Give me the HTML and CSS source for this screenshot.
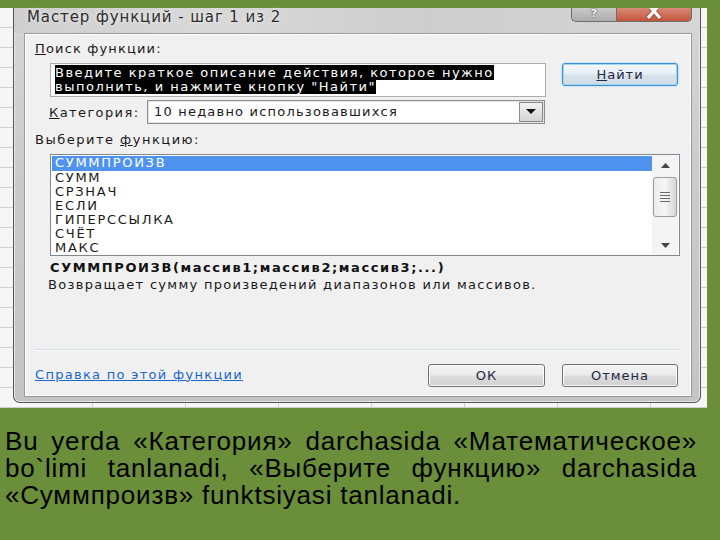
FILE: index.html
```html
<!DOCTYPE html>
<html lang="ru">
<head>
<meta charset="utf-8">
<title>Мастер функций</title>
<link rel="stylesheet" href="styles.css">
</head>
<body>
<div class="shot">
  <div class="window">
    <div class="titlebar">
      <span class="title">Мастер функций - шаг 1 из 2</span>
      <div class="tb-buttons">
        <div class="tb-btn tb-help"><span class="tb-glyph">?</span></div>
        <div class="tb-btn tb-close">
          <svg class="tb-x" width="20" height="16" viewBox="0 0 20 16"><path d="M4 -4 L16 10 M16 -4 L4 10" stroke="#fff" stroke-width="3.2" fill="none"/></svg>
        </div>
      </div>
    </div>
    <div class="client">
      <div class="lbl lbl-top"><u>П</u>оиск функции:</div>
      <div class="row search-row">
        <div class="textbox"><span class="sel">Введите краткое описание действия, которое нужно <br>выполнить, и нажмите кнопку "Найти"</span></div>
        <button class="btn btn-find"><u>Н</u>айти</button>
      </div>
      <div class="row cat-row">
        <span class="cat-label"><u>К</u>атегория:</span>
        <div class="combo">
          <span class="combo-text">10 недавно использовавшихся</span>
          <span class="combo-btn"><svg width="10" height="6" viewBox="0 0 10 6"><path d="M0 0 H10 L5 5 Z" fill="#111"/></svg></span>
        </div>
      </div>
      <div class="lbl lbl-choose">Выберите <u>ф</u>ункцию:</div>
      <div class="listbox">
        <ul class="items">
          <li class="selected">СУММПРОИЗВ</li>
          <li>СУММ</li>
          <li>СРЗНАЧ</li>
          <li>ЕСЛИ</li>
          <li>ГИПЕРССЫЛКА</li>
          <li>СЧЁТ</li>
          <li>МАКС</li>
        </ul>
        <div class="scrollbar">
          <div class="sb-arrow"><svg width="9" height="5" viewBox="0 0 9 5"><path d="M0 5 L4.5 0 L9 5 Z" fill="#444"/></svg></div>
          <div class="sb-track">
            <div class="sb-thumb">
              <span class="grip"></span><span class="grip"></span><span class="grip"></span><span class="grip"></span>
            </div>
          </div>
          <div class="sb-arrow sb-down"><svg width="9" height="5" viewBox="0 0 9 5"><path d="M0 0 L9 0 L4.5 5 Z" fill="#444"/></svg></div>
        </div>
      </div>
      <div class="syntax">СУММПРОИЗВ(массив1;массив2;массив3;...)</div>
      <div class="desc">Возвращает сумму произведений диапазонов или массивов.</div>
      <div class="footer">
        <div class="sep"></div>
        <div class="row btn-row">
          <a class="help-link" href="#">Справка по этой функции</a>
          <button class="btn btn-ok">ОК</button>
          <button class="btn btn-cancel">Отмена</button>
        </div>
      </div>
    </div>
  </div>
</div>
<p class="caption">Bu yerda «Категория» darchasida «Математическое» bo`limi tanlanadi, «Выберите функцию» darchasida «Суммпроизв» funktsiyasi tanlanadi.</p>
</body>
</html>
```
FILE: styles.css
```css
html, body {
  margin: 0;
  padding: 0;
}
body {
  background: #6a8e39;
  width: 720px;
  height: 540px;
  overflow: hidden;
}
.shot {
  margin-top: 8px;
  width: 707px;
  height: 400px;
  box-sizing: border-box;
  padding-left: 13px;
  background-color: #f6f6f6;
  background-image:
    repeating-linear-gradient(to bottom, transparent 0 19px, #cfcfcf 19px 20px),
    repeating-linear-gradient(to right, transparent 0 92px, #cfcfcf 92px 93px);
}
.window {
  width: 688px;
  height: 395px;
  box-sizing: border-box;
  border: 1px solid #555;
  border-top: none;
  border-radius: 0 0 7px 7px;
  background: linear-gradient(to bottom, #d6d6d6 0%, #cbcbcb 40%, #c4c4c4 100%);
  box-shadow: inset 1px 0 0 #e8e8e8, inset -1px 0 0 #e8e8e8, inset 0 -1px 0 #e8e8e8;
  display: flex;
  flex-direction: column;
}
.titlebar {
  height: 25px;
  display: flex;
  justify-content: space-between;
  align-items: flex-start;
  background: linear-gradient(to right, #cfcfcf 0%, #d9d9d9 30%, #cdcdcd 60%, #d6d6d6 100%);
}
.title {
  font-family: "DejaVu Sans", sans-serif;
  font-size: 15px;
  letter-spacing: 0.9px;
  line-height: 18px;
  color: #2e2e2e;
  padding-left: 13px;
  text-shadow: 0 0 4px rgba(255,255,255,0.8);
}
.tb-buttons {
  display: flex;
  margin-right: 8px;
}
.tb-btn {
  height: 14px;
  box-sizing: border-box;
  border: 1px solid #6e6e6e;
  border-top: none;
  overflow: hidden;
  display: flex;
  justify-content: center;
  align-items: flex-start;
}
.tb-help {
  width: 45px;
  border-radius: 0 0 0 5px;
  background: linear-gradient(to bottom, #c9c9c9, #adadad);
  border-right: none;
}
.tb-glyph {
  font-family: "DejaVu Sans", sans-serif;
  font-weight: bold;
  font-size: 11px;
  line-height: 12px;
  margin-top: 0;
  color: #f2f2f2;
  text-shadow: 0 0 1px #555, 0 0 2px #555;
}
.tb-close {
  width: 76px;
  border-radius: 0 0 5px 0;
  background: linear-gradient(to bottom, #d88b78, #c4553d);
}
.tb-x {
  margin-top: 0;
  filter: drop-shadow(0 0 1px #7a2a1a);
}
.client {
  flex: 1;
  margin: 0 8px 5px 10px;
  border: 1px solid #9a9a9a;
  box-shadow: inset 0 0 0 1px #ffffff;
  background: #f0f0f0;
  padding: 0 11px 9px 10px;
  display: flex;
  flex-direction: column;
  font-family: "DejaVu Sans", sans-serif;
  font-size: 13px;
  letter-spacing: 1.4px;
  color: #1a1a1a;
}
.lbl {
  line-height: 16px;
}
.lbl-top {
  margin-top: 7px;
  letter-spacing: 1.15px;
}
.lbl-choose {
  margin-top: 8px;
  letter-spacing: 1.5px;
}
.row {
  display: flex;
  align-items: flex-start;
}
.search-row {
  margin-top: 6px;
  margin-left: 15px;
}
.textbox {
  width: 496px;
  height: 34px;
  box-sizing: border-box;
  background: #fff;
  border: 1px solid #abadb3;
  padding: 2px 4px 0;
  line-height: 14px;
  letter-spacing: 1.5px;
}
.sel {
  background: #000;
  color: #fff;
}
.btn {
  font-family: "DejaVu Sans", sans-serif;
  font-size: 13px;
  letter-spacing: 1px;
  color: #1d2844;
  height: 23px;
  box-sizing: border-box;
  border: 1px solid #707070;
  border-radius: 3px;
  background: linear-gradient(to bottom, #f3f3f3 0%, #ebebeb 48%, #dddddd 52%, #d0d0d0 100%);
  box-shadow: inset 0 0 0 1px #fbfbfb;
  padding: 0;
  line-height: 20px;
}
.btn-find {
  width: 116px;
  margin-left: 16px;
  border-color: #3d8fd0;
  box-shadow: inset 0 0 0 1px #9fd8f7, 0 0 2px #7fc4ee;
  background: linear-gradient(to bottom, #f4f8fb 0%, #e6eef4 48%, #d8e2ea 52%, #cfdbe4 100%);
}
.cat-row {
  margin-top: 3px;
  align-items: center;
  height: 24px;
}
.cat-label {
  width: 98px;
  margin-left: 14px;
}
.combo {
  width: 398px;
  height: 24px;
  box-sizing: border-box;
  border: 1px solid #8f8f8f;
  box-shadow: inset 0 0 0 1px #e2e2e2;
  background: #fff;
  display: flex;
  align-items: center;
  justify-content: space-between;
  padding: 1px;
}
.combo-text {
  padding-left: 5px;
  line-height: 16px;
  letter-spacing: 1.2px;
}
.combo-btn {
  width: 24px;
  height: 20px;
  box-sizing: border-box;
  border: 1px solid #8a8a8a;
  background: linear-gradient(to bottom, #f2f2f2, #d4d4d4);
  display: flex;
  align-items: center;
  justify-content: center;
}
.listbox {
  margin-top: 6px;
  margin-left: 15px;
  height: 102px;
  box-sizing: border-box;
  border: 1px solid #828790;
  background: #fff;
  display: flex;
  padding: 1px 1px 1px 1px;
}
.items {
  list-style: none;
  margin: 0;
  padding: 0;
  flex: 1;
}
.items li {
  line-height: 14px;
  height: 14px;
  padding-left: 3px;
  color: #1a1a1a;
  letter-spacing: 1.7px;
}
.items li.selected {
  background: #4f93ef;
  color: #fff;
  height: 15px;
}
.scrollbar {
  width: 26px;
  display: flex;
  flex-direction: column;
  background: #f4f4f4;
  margin: -1px 0;
}
.sb-arrow {
  height: 20px;
  display: flex;
  align-items: center;
  justify-content: center;
}
.sb-track {
  flex: 1;
  padding: 2px 1px 0;
}
.sb-thumb {
  height: 40px;
  box-sizing: border-box;
  border: 1px solid #9a9a9a;
  border-radius: 3px;
  background: linear-gradient(to right, #ececec, #f6f6f6 50%, #d6d6d6);
  display: flex;
  flex-direction: column;
  align-items: center;
  justify-content: center;
  gap: 2px;
}
.grip {
  width: 10px;
  height: 1px;
  background: #6a6a6a;
}
.syntax {
  margin-top: 4px;
  margin-left: 15px;
  font-weight: bold;
  line-height: 16px;
  letter-spacing: 1.6px;
  color: #111;
}
.desc {
  margin-top: 1px;
  margin-left: 13px;
  line-height: 16px;
  letter-spacing: 1.3px;
}
.footer {
  margin-top: auto;
}
.sep {
  height: 1px;
  background: #d8dde3;
  box-shadow: 0 1px 0 #fafafa;
}
.btn-row {
  margin-top: 14px;
  align-items: center;
}
.help-link {
  color: #1a66cc;
  text-decoration: underline;
  line-height: 16px;
  margin-right: auto;
  margin-top: -2px;
  letter-spacing: 1.3px;
}
.btn-ok {
  width: 117px;
}
.btn-cancel {
  width: 116px;
  margin-left: 17px;
  margin-right: 2px;
}
.caption {
  margin: 20px 0 0 5px;
  width: 692px;
  font-family: "Liberation Sans", Arial, sans-serif;
  font-size: 26px;
  letter-spacing: 0.8px;
  line-height: 27px;
  text-align: justify;
  color: #000;
}
```
